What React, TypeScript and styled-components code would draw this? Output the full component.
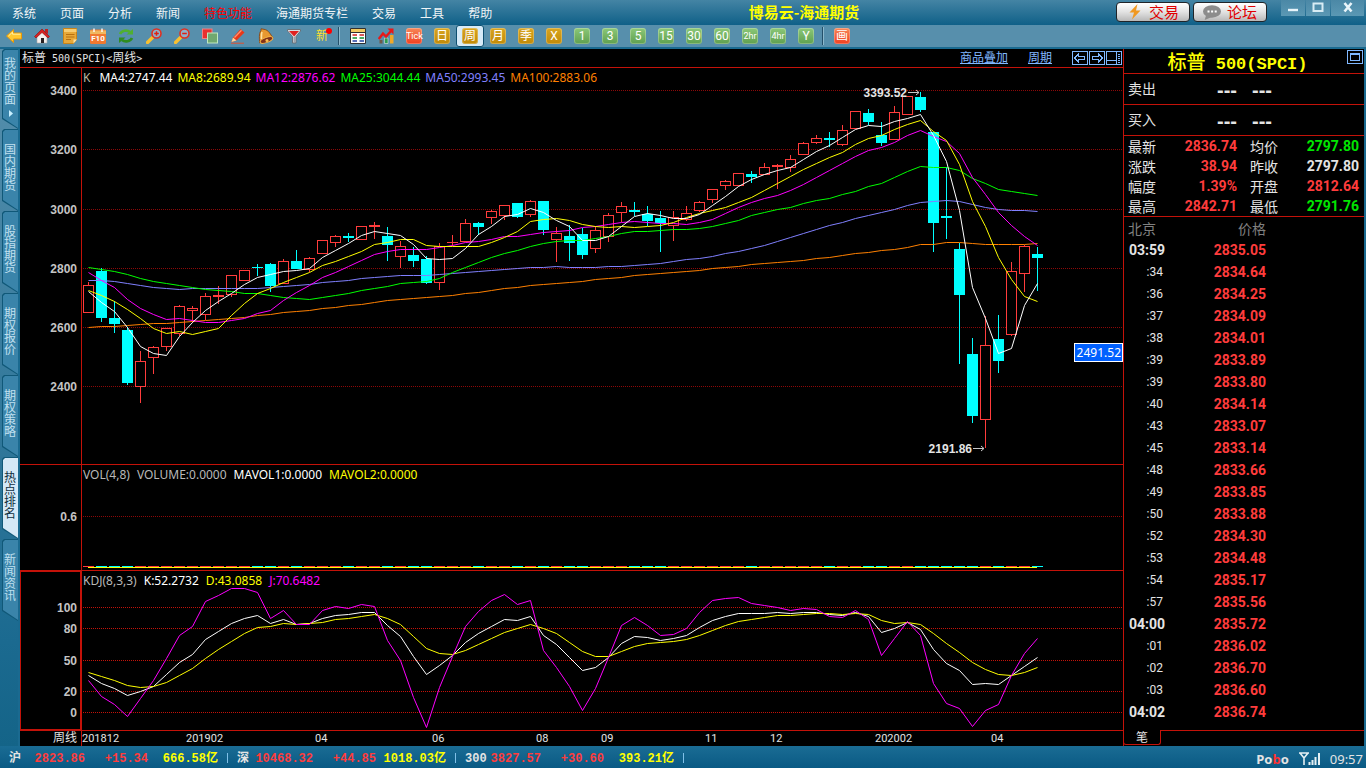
import React from "react";
import styled, { createGlobalStyle, css } from "styled-components";

const CJK = '"Noto Sans CJK SC", sans-serif';
const RED_LINE = "#c41209";
const RED = "#ff3c3c";
const CYAN = "#00ffff";
const GREEN = "#00e600";
const YELLOW = "#ffff00";
const LIGHT = "#e4e4e4";
const FRAME = "#1a6a90";

const GlobalStyle = createGlobalStyle`
  * { box-sizing: border-box; }
  body { margin: 0; background: #000; font-family: Roboto, ${CJK}; font-size: 12px; }
  button { font: inherit; color: inherit; background: none; border: 0; padding: 0; margin: 0; }
  h1, h2, dl, dd, dt, p { margin: 0; font-weight: normal; }
`;

/* ---------- market data ---------- */

// [rising, body top, body bottom, high, low] in rows of the price pane
type Candle = [number, number, number, number, number];
const CANDLES: Candle[] = [
  [1, 285, 313, 282, 313], [0, 271, 318, 268, 322], [0, 318, 324, 301, 333], [0, 330, 383, 327, 385],
  [1, 361, 387, 351, 403], [1, 347, 358, 346, 374], [1, 328, 347, 328, 351], [1, 306, 334, 305, 336],
  [1, 308, 311, 306, 323], [1, 296, 315, 293, 320], [1, 295, 297, 286, 304], [1, 275, 295, 275, 297],
  [1, 270, 281, 270, 281], [0, 267, 268, 264, 276], [0, 264, 286, 263, 292], [1, 261, 284, 259, 284],
  [0, 261, 269, 250, 269], [1, 258, 270, 257, 272], [1, 240, 254, 240, 254], [1, 236, 243, 235, 247],
  [0, 236, 238, 233, 242], [1, 226, 240, 226, 240], [1, 225, 227, 222, 239], [0, 236, 245, 227, 261],
  [1, 246, 257, 241, 268], [0, 255, 261, 247, 267], [0, 259, 283, 256, 284], [1, 246, 283, 243, 290],
  [1, 242, 243, 235, 246], [1, 223, 242, 219, 242], [0, 223, 227, 222, 235], [1, 211, 218, 210, 224],
  [1, 205, 216, 205, 220], [0, 203, 217, 203, 218], [1, 201, 215, 200, 217], [0, 201, 230, 201, 235],
  [1, 233, 240, 227, 262], [0, 236, 243, 225, 261], [0, 234, 255, 228, 259], [1, 230, 249, 226, 253],
  [1, 215, 237, 213, 242], [1, 206, 213, 202, 222], [0, 210, 212, 202, 216], [0, 214, 221, 206, 226],
  [0, 218, 223, 211, 252], [1, 217, 226, 211, 241], [1, 213, 220, 206, 221], [1, 202, 211, 201, 212],
  [1, 189, 200, 189, 203], [1, 181, 186, 180, 190], [1, 173, 186, 173, 186], [0, 174, 177, 171, 183],
  [1, 167, 175, 163, 175], [1, 165, 167, 164, 189], [1, 159, 168, 155, 172], [1, 143, 155, 142, 155],
  [1, 138, 143, 135, 144], [0, 138, 140, 132, 147], [1, 130, 145, 125, 146], [1, 111, 129, 111, 129],
  [0, 113, 122, 109, 125], [0, 135, 143, 122, 146], [1, 112, 140, 106, 140], [1, 96, 115, 96, 115],
  [0, 97, 110, 92, 112], [0, 132, 223, 132, 252], [0, 216, 218, 167, 239], [0, 249, 295, 243, 364],
  [0, 354, 416, 338, 423], [1, 345, 420, 316, 448], [0, 339, 361, 315, 373], [1, 271, 335, 262, 336],
  [1, 246, 274, 245, 292], [0, 254, 258, 247, 291],
];

const MA4 = [291, 302, 311, 327, 346, 353, 355, 336, 322, 310, 301, 293, 284, 277, 274, 271, 270, 268, 257, 250, 243, 235, 231, 233, 235, 244, 258, 259, 258, 248, 234, 226, 216, 214, 208, 212, 220, 226, 240, 240, 236, 226, 216, 213, 215, 218, 218, 214, 205, 196, 186, 179, 174, 170, 167, 159, 151, 145, 137, 129, 125, 126, 121, 118, 114, 135, 161, 210, 287, 318, 353, 348, 305, 283];
const MA8 = [290, 295, 301, 309, 318, 328, 333, 331, 334, 331, 328, 315, 303, 293, 288, 282, 277, 272, 265, 261, 256, 251, 244, 242, 239, 239, 245, 246, 246, 246, 246, 242, 237, 231, 221, 219, 218, 220, 224, 226, 227, 226, 227, 226, 225, 222, 217, 213, 210, 207, 202, 197, 190, 183, 176, 169, 163, 157, 152, 144, 138, 135, 129, 124, 120, 131, 140, 164, 201, 226, 257, 279, 296, 301];
const MA12 = [272, 280, 287, 299, 308, 314, 319, 318, 320, 322, 322, 320, 318, 313, 310, 300, 292, 285, 277, 272, 266, 260, 254, 251, 249, 249, 249, 247, 245, 242, 241, 239, 236, 236, 234, 232, 231, 230, 227, 226, 224, 222, 221, 222, 223, 223, 224, 222, 219, 213, 207, 202, 198, 195, 190, 184, 177, 170, 163, 156, 150, 147, 142, 135, 130, 136, 141, 153, 177, 194, 212, 225, 236, 245];
const MA25 = [267, 269, 271, 274, 278, 281, 283, 285, 287, 289, 290, 291, 293, 293, 295, 297, 298, 299, 297, 295, 293, 290, 288, 286, 283, 282, 281, 278, 272, 267, 262, 257, 253, 250, 246, 243, 241, 240, 240, 238, 236, 233, 231, 231, 230, 229, 229, 228, 226, 223, 220, 215, 212, 209, 207, 203, 200, 198, 194, 191, 186, 183, 177, 171, 166, 167, 167, 170, 178, 183, 189, 191, 193, 195];
const MA50 = [280, 280, 281, 283, 285, 287, 288, 289, 288, 288, 288, 288, 288, 288, 287, 286, 285, 284, 282, 281, 280, 278, 277, 276, 275, 275, 275, 274, 273, 272, 271, 270, 269, 268, 267, 267, 266, 267, 267, 267, 266, 266, 265, 264, 263, 261, 259, 258, 256, 253, 251, 248, 245, 241, 237, 233, 229, 225, 222, 218, 215, 212, 209, 205, 202, 201, 200, 201, 204, 207, 209, 210, 210, 211];
const MA100 = [327, 326, 326, 325, 324, 323, 323, 322, 321, 320, 319, 318, 317, 315, 314, 312, 311, 310, 308, 307, 305, 304, 302, 300, 299, 298, 297, 296, 295, 293, 292, 290, 288, 287, 285, 284, 283, 282, 281, 279, 278, 277, 275, 274, 273, 272, 271, 270, 268, 267, 266, 264, 263, 262, 261, 260, 258, 257, 255, 253, 252, 250, 249, 247, 244, 244, 242, 242, 243, 244, 244, 244, 244, 243];
const K = [675, 683, 688, 695, 691, 686, 674, 662, 654, 639, 631, 623, 618, 615, 623, 619, 624, 623, 618, 615, 614, 612, 612, 625, 636, 656, 674, 665, 655, 642, 633, 626, 619, 620, 616, 635, 644, 657, 670, 667, 657, 643, 636, 637, 640, 638, 635, 627, 620, 616, 613, 613, 613, 612, 613, 612, 612, 614, 615, 612, 616, 632, 628, 622, 629, 649, 663, 670, 684, 683, 684, 675, 666, 657];
const D = [672, 676, 680, 685, 687, 686, 682, 675, 668, 658, 649, 641, 633, 627, 626, 623, 624, 623, 622, 619, 618, 616, 614, 618, 624, 636, 648, 653, 654, 650, 644, 638, 632, 628, 624, 628, 633, 642, 651, 656, 656, 651, 646, 643, 642, 641, 639, 635, 630, 625, 621, 619, 617, 615, 615, 614, 613, 613, 614, 613, 614, 620, 623, 622, 624, 633, 643, 652, 662, 669, 674, 675, 672, 667];
const J = [680, 696, 704, 716, 698, 680, 658, 635, 626, 601, 595, 588, 588, 592, 618, 610, 624, 624, 610, 606, 608, 604, 606, 640, 660, 697, 727, 687, 656, 626, 611, 600, 594, 604, 600, 650, 667, 686, 710, 688, 657, 625, 617, 625, 635, 634, 628, 612, 600, 598, 597, 603, 605, 607, 610, 608, 609, 616, 617, 610, 619, 655, 638, 621, 635, 683, 703, 708, 726, 710, 704, 675, 653, 638];

const STEP = 13;
const centre = (i: number) => 6 + STEP * i;
const toPoints = (ys: number[]) => ys.map((y, i) => `${centre(i) + 0.5},${y + 0.5}`).join(" ");

const TICKS: [string, string][] = [
  ["03:59", "2835.05"], [":34", "2834.64"], [":36", "2834.25"], [":37", "2834.09"], [":38", "2834.01"],
  [":39", "2833.89"], [":39", "2833.80"], [":40", "2834.14"], [":43", "2833.07"], [":45", "2833.14"],
  [":48", "2833.66"], [":49", "2833.85"], [":50", "2833.88"], [":52", "2834.30"], [":53", "2834.48"],
  [":54", "2835.17"], [":57", "2835.56"], ["04:00", "2835.72"], [":01", "2836.02"], [":02", "2836.70"],
  [":03", "2836.60"], ["04:02", "2836.74"],
];

const STATS: [string, string, string][] = [
  ["最新", "2836.74", RED], ["均价", "2797.80", GREEN],
  ["涨跌", "38.94", RED], ["昨收", "2797.80", LIGHT],
  ["幅度", "1.39%", RED], ["开盘", "2812.64", RED],
  ["最高", "2842.71", RED], ["最低", "2791.76", GREEN],
];

/* ---------- window frame ---------- */

const Page = styled.div`
  display: flex;
  flex-direction: column;
  min-height: 100vh;
  color: ${LIGHT};
`;

const TitleBar = styled.header`
  display: flex;
  height: 25px;
  padding-left: 12px;
  background: linear-gradient(#4484a4, #0f6088);
`;

const Menu = styled.nav`
  display: flex;
  gap: 24px;
`;

const MenuItem = styled.button<{ $hot?: boolean }>`
  height: 25px;
  padding-top: 3px;
  line-height: 22px;
  color: ${(p) => (p.$hot ? "#ff0000" : "#f0f4f6")};
`;

const AppTitle = styled.h1`
  flex: 1;
  text-align: center;
  font: bold 15px/24px ${CJK};
  color: ${YELLOW};
`;

const TitleActions = styled.div`
  display: flex;
  gap: 3px;
  padding: 2px 14px 0 0;
`;

const TitleButton = styled.button`
  display: flex;
  align-items: center;
  justify-content: center;
  gap: 6px;
  width: 74px;
  height: 20px;
  border: 1px solid #202428;
  border-radius: 4px;
  background: linear-gradient(#ffffff, #e2e2e2 50%, #b8b8b8);
  color: #e00000;
  font: 15px/18px ${CJK};
`;

const WindowControls = styled.div`
  display: flex;
  gap: 1px;
  padding-right: 2px;
`;

const WindowButton = styled.button<{ $wide?: boolean }>`
  display: flex;
  justify-content: center;
  width: ${(p) => (p.$wide ? 33 : 24)}px;
  height: 16px;
  background: linear-gradient(#4b88a6, #5b98b4);
`;

const Toolbar = styled.div`
  display: flex;
  height: 24px;
  border-bottom: 2px solid ${FRAME};
  background: #578fac;
`;

const ToolButton = styled.button<{ $active?: boolean }>`
  display: flex;
  align-items: center;
  justify-content: center;
  width: 28px;
  height: 22px;
  ${(p) =>
    p.$active &&
    css`
      border: 1px solid #0d4f70;
      border-radius: 3px;
      background: #d6ebf8;
    `}
`;

const ToolDivider = styled.span`
  width: 6px;
  margin: 2px 0 2px 2px;
  border-left: 1px solid #24506a;
  box-shadow: inset 1px 0 #8cb8cc;
`;

const tints = {
  gold: "linear-gradient(#d9a520, #c08a08)",
  green: "linear-gradient(#8cc878, #5ea050)",
  red: "linear-gradient(#f88858, #f04020)",
};
const Badge = styled.span<{ $tint: keyof typeof tints }>`
  display: block;
  width: 16px;
  height: 16px;
  border-radius: 3px;
  background: ${(p) => tints[p.$tint]};
  box-shadow: inset 0 0 0 1px rgba(255, 255, 255, 0.25);
  color: #fff;
  font: 12px/16px Roboto, ${CJK};
  text-align: center;
`;
const SmallBadge = styled(Badge)`
  font: 9px/16px Roboto, ${CJK};
`;

const NewLabel = styled.span`
  position: relative;
  color: #ffe030;
  line-height: 22px;
  &::after {
    content: "";
    position: absolute;
    top: 3px;
    right: -4px;
    width: 6px;
    height: 6px;
    border-radius: 50%;
    background: #ff0000;
  }
`;

const Workspace = styled.div`
  display: flex;
  flex: 1;
  border-right: 2px solid ${FRAME};
  background: #000;
`;

const SideTabs = styled.nav`
  width: 20px;
  padding-left: 2px;
  border-right: 2px solid ${FRAME};
  background: linear-gradient(#5890ad, #1b6a90 85%, #146488);
`;

const SideTab = styled.button<{ $active?: boolean; $first?: boolean }>`
  position: relative;
  display: flex;
  flex-direction: column;
  isolation: isolate;
  width: 16px;
  height: ${(p) => (p.$first ? 80 : 82)}px;
  padding: ${(p) => (p.$first ? "8px 2px 0" : "14px 2px 0")};
  color: ${(p) => (p.$active ? "#103040" : "#c0e0f0")};
  font: 12px/12px ${CJK};
  text-align: left;
  &::before,
  &::after {
    content: "";
    position: absolute;
    inset: 0;
    z-index: -2;
    clip-path: polygon(0 2px, 2px 0, 100% 0, 100% 100%, 0 calc(100% - 10px));
    background: #105878;
  }
  &::after {
    inset: 1px 0 1px 1px;
    z-index: -1;
    background: ${(p) => (p.$active ? "#d4e8f6" : "#3a84aa")};
  }
`;

/* ---------- chart column ---------- */

const ChartColumn = styled.main`
  display: flex;
  flex: 1;
  flex-direction: column;
  min-width: 0;
`;

const ChartHeader = styled.div`
  display: flex;
  align-items: center;
  height: 19px;
  padding: 0 1px 0 2px;
  border-bottom: 1px solid ${RED_LINE};
  line-height: 18px;
`;

const Latin = styled.span`
  font: 10px/18px "DejaVu Sans Mono", monospace;
`;

const ChartTitle = styled.h2`
  flex: 1;
  font-size: 12px;
`;

const HeaderLink = styled.a`
  margin-right: 20px;
  color: #80b8ff;
`;

const IconRow = styled.div`
  display: flex;
  gap: 1px;
  color: #80b8ff;
`;

const IconButton = styled.button`
  display: block;
  height: 15px;
`;

const Pane = styled.section<{ $grow?: boolean }>`
  display: flex;
  flex: ${(p) => (p.$grow ? 1 : "none")};
  border-bottom: 1px solid ${RED_LINE};
`;

const AxisColumn = styled.div<{ $selected?: boolean }>`
  display: flex;
  width: 62px;
  border-right: 1px solid ${RED_LINE};
  ${(p) =>
    p.$selected &&
    css`
      box-shadow: inset 0 0 0 1px ${RED_LINE};
    `}
`;

const Plot = styled.div`
  position: relative;
  flex: 1;
  min-width: 0;
`;

const Legend = styled.div<{ $loose?: boolean }>`
  display: flex;
  gap: ${(p) => (p.$loose ? 7 : 5)}px;
  height: 20px;
  padding-left: 1px;
  font: 12px/20px "Noto Sans", sans-serif;
  white-space: nowrap;
`;

const LegendItem = styled.span<{ $color: string; $gap?: boolean }>`
  color: ${(p) => p.$color};
  padding-right: ${(p) => (p.$gap ? 4 : 0)}px;
`;

const Drawing = styled.svg`
  display: block;
  width: 100%;
  overflow: visible;
`;

const PriceTag = styled.output`
  position: absolute;
  top: 275px;
  right: 0;
  padding: 0 1px 0 2px;
  border: 1px solid #fff;
  background: #0060ff;
  color: #fff;
  font: 12px/17px "Noto Sans", sans-serif;
`;

const DateRow = styled.div`
  display: flex;
  height: 15px;
  line-height: 15px;
`;

const PeriodCell = styled.div`
  width: 62px;
  padding-right: 4px;
  border-right: 1px solid ${RED_LINE};
  text-align: right;
`;

/* ---------- quote column ---------- */

const QuoteColumn = styled.aside`
  display: flex;
  flex-direction: column;
  width: 241px;
  border-left: 1px solid ${RED_LINE};
`;

const QuoteTitle = styled.div`
  display: flex;
  height: 25px;
  padding: 1px 1px 0 0;
  border-bottom: 1px solid ${RED_LINE};
`;

const QuoteName = styled.h2`
  flex: 1;
  padding-left: 4px;
  color: ${YELLOW};
  font: bold 17px/23px "Liberation Mono", ${CJK};
  text-align: center;
`;

const QuoteNameHan = styled.span`
  font: 500 19px/22px ${CJK};
`;

const BidRow = styled.div`
  display: grid;
  grid-template-columns: 89px 35px 1fr;
  height: 31px;
  padding: 0 5px 0 4px;
  border-bottom: 1px solid ${RED_LINE};
  font: 14px/29px ${CJK};
`;

const Dashes = styled.span`
  font: bold 20px/32px "Liberation Sans", sans-serif;
`;

const Stats = styled.dl`
  display: grid;
  grid-template-columns: 42px 67px 13px 42px 1fr;
  padding: 0 5px 0 4px;
  border-bottom: 1px solid ${RED_LINE};
  font: 14px/20px ${CJK};
`;

const StatLabel = styled.dt<{ $second: boolean }>`
  grid-column: ${(p) => (p.$second ? 4 : 1)};
`;

const StatValue = styled.dd<{ $color: string; $second: boolean }>`
  grid-column: ${(p) => (p.$second ? 5 : 2)};
  color: ${(p) => p.$color};
  font: bold 14px/20px Roboto, sans-serif;
  text-align: right;
`;

const TickTable = styled.table`
  width: 142px;
  border-collapse: collapse;
  table-layout: fixed;
  th {
    height: 22px;
    padding: 0;
    color: #808080;
    font: 14px/22px ${CJK};
    text-align: right;
  }
  th:first-child {
    width: 39px;
    padding-left: 4px;
    text-align: left;
  }
`;

const TimeCell = styled.td<{ $full: boolean }>`
  height: 22px;
  padding: 0 0 0 5px;
  color: ${LIGHT};
  font: ${(p) => (p.$full ? "bold 14px" : "12px")}/22px Roboto, sans-serif;
  text-align: ${(p) => (p.$full ? "left" : "right")};
`;

const PriceCell = styled.td`
  padding: 0;
  color: ${RED};
  font: bold 14px/22px Roboto, sans-serif;
  text-align: right;
`;

const QuoteTabs = styled.div`
  display: flex;
  margin-top: auto;
  height: 16px;
  margin-left: -1px;
  &::after {
    content: "";
    flex: 1;
    border-top: 1px solid ${RED_LINE};
  }
`;

const QuoteTab = styled.button`
  width: 38px;
  height: 15px;
  padding-top: 2px;
  border: solid ${RED_LINE};
  border-width: 0 1px 1px;
  border-radius: 0 0 3px 3px;
  line-height: 12px;
`;

/* ---------- status bar ---------- */

const StatusBar = styled.footer`
  display: flex;
  align-items: center;
  height: 22px;
  padding: 3px 3px 0 9px;
  background: linear-gradient(#1a6c94, #0a5a84);
  line-height: 18px;
`;

const IndexQuote = styled.div`
  display: grid;
  grid-template-columns: 16px 60px 63px 70px 19px;
  font: bold 12px/18px "Liberation Mono", ${CJK};
  text-align: right;
  white-space: nowrap;
`;

const IndexName = styled.span`
  text-align: left;
`;
const IndexValue = styled.span<{ $color: string }>`
  color: ${(p) => p.$color};
`;
const IndexDivider = styled.span`
  width: 1px;
  height: 10px;
  margin: 3px 9px;
  background: #80c0e8;
`;

const Brand = styled.span`
  margin-left: auto;
  margin-right: 10px;
  font: bold 13px/18px "Noto Sans", sans-serif;
`;
const BrandAccent = styled.span`
  color: #ff3030;
`;
const Clock = styled.time`
  margin-left: 9px;
  font: 13px/18px "Noto Sans", sans-serif;
`;

/* ---------- icons ---------- */

const Icon = ({ children, size = 16 }: { children: React.ReactNode; size?: number }) => (
  <svg width={size} height={size} viewBox="0 0 16 16" fill="none" aria-hidden="true">
    {children}
  </svg>
);

const BackIcon = () => (
  <Icon>
    <path d="M0.5 8 7.5 1.5V5H15.500V11H7.500V14.500Z" fill="#ffc830" stroke="#e89808" />
    <path d="M2.500 8 6.500 4.200V6.200H14.500" stroke="#fff0a0" />
  </Icon>
);
const HomeIcon = () => (
  <Icon>
    <path d="M3 8 8 3.500 13 8V15H3Z" fill="#f4f0ee" stroke="#b0a8a8" strokeWidth=".6" />
    <path d="M11 1H14V6L11 4Z" fill="#c02020" />
    <path d="M0.500 8.500 8 1 15.500 8.500 14 10 8 4.500 2 10Z" fill="#d82020" stroke="#881010" strokeWidth=".6" />
    <path d="M7 10h3v5H7Z" fill="#282020" />
  </Icon>
);
const NoteIcon = () => (
  <Icon>
    <path d="M1.500 .500H14.500V11.500L11.500 15.500H1.500Z" fill="#e8a838" stroke="#c88418" />
    <path d="M2 1H14.500V4H2Z" fill="#f8cc70" />
    <path d="M4 6.500H12.500M4 9H12.500M4 11.500H9" stroke="#b87010" />
    <path d="M15 11.500H11.500V15.500Z" fill="#ffe0a0" />
  </Icon>
);
const F10Icon = () => (
  <Icon>
    <rect x="0" y="1.500" width="16" height="14.500" rx="1.500" fill="#f07830" />
    <path d="M0 2.500H16V6H0Z" fill="#f0b860" />
    <path d="M4 .500V4M12 .500V4" stroke="#fff" strokeWidth="1.400" />
    <text x="8" y="13" fontFamily="Roboto" fontWeight="bold" fontSize="8" textAnchor="middle" fill="#fff">F10</text>
  </Icon>
);
const RefreshIcon = () => (
  <Icon>
    <path d="M2 6C3.500 2.500 9 1.500 12 4" stroke="#50b030" strokeWidth="2.600" />
    <path d="M8.500 6.500H15V1Z" fill="#50b030" />
    <path d="M14 10C12.500 13.500 7 14.500 4 12" stroke="#2f8c20" strokeWidth="2.600" />
    <path d="M7.500 9.500H1V15Z" fill="#2f8c20" />
  </Icon>
);
const LensIcon = ({ plus }: { plus?: boolean }) => (
  <Icon>
    <path d="M1.500 14.500 6.500 9.500" stroke="#f8c030" strokeWidth="3.400" strokeLinecap="round" />
    <circle cx="10.500" cy="5.500" r="4.500" fill="#8fb0c8" stroke="#e03020" strokeWidth="1.600" />
    <path d={plus ? "M8.200 5.500H12.800M10.500 3.200V7.800" : "M8.200 5.500H12.800"} stroke="#e02010" strokeWidth="1.500" />
  </Icon>
);
const LayersIcon = () => (
  <Icon>
    <rect x="0.500" y="1" width="9.500" height="9.500" fill="#e83030" stroke="#f08080" />
    <rect x="5.500" y="5" width="10" height="10" fill="#70a870" stroke="#c0e8c0" />
  </Icon>
);
const PencilIcon = () => (
  <Icon>
    <path d="M1 15.200H14" stroke="#e05030" />
    <path d="M1.500 14 3 9.500 10.500 1 14.500 4.500 6.500 12.500Z" fill="#e83818" />
    <path d="M4.500 9.500 11.500 2.200" stroke="#ff9070" strokeWidth="1.300" />
    <path d="M1.500 14 3 9.500 6.500 12.500Z" fill="#f8d8a0" />
  </Icon>
);
const BellIcon = () => (
  <Icon>
    <path d="M3 .800 6 1.300C11 2 12.500 7 15 9.500L1.500 14.800C1.700 11 .500 6 3 2.500Z" fill="#e89830" stroke="#7c3c10" strokeWidth=".8" />
    <path d="M4 4C3 6.500 3.500 9 3.500 11" stroke="#ffe0a0" strokeWidth="1.600" />
    <ellipse cx="8.500" cy="12" rx="6.600" ry="2.500" transform="rotate(-20 8.500 12)" fill="#803018" stroke="#f0b048" />
    <circle cx="9" cy="12.500" r="1.500" fill="#ffc050" />
  </Icon>
);
const FunnelIcon = () => (
  <Icon>
    <path d="M1.500 1.500H14.500V3L10 8.500V15H6.500V8.500L1.500 3Z" fill="#d8dce0" stroke="#687078" />
    <path d="M3 3H13L8.200 8.500Z" fill="#e02020" />
    <path d="M8.200 9V14.500" stroke="#808890" />
  </Icon>
);
const ListIcon = () => (
  <Icon>
    <path d="M.500 .500H15.500V15.500H.500Z" fill="#fff" stroke="#303030" />
    <path d="M1 1H15V4H1Z" fill="#f0c860" />
    <path d="M0 4.500H16" stroke="#303030" />
    <path d="M2.500 7H7M9.500 7H14" stroke="#d02020" strokeWidth="1.300" />
    <path d="M2.500 10H7M9.500 10H14" stroke="#109030" strokeWidth="1.300" />
    <path d="M2.500 13H7M9.500 13H14" stroke="#2040a0" strokeWidth="1.300" />
  </Icon>
);
const TrendIcon = () => (
  <Icon>
    <path d="M1.500 12h3v3.500h-3Z" fill="#705848" />
    <path d="M6.500 10h3.500v5.500H6.500Z" fill="#2c9c50" stroke="#e0e0e0" strokeWidth=".6" />
    <path d="M12 7h3.500v8.500H12Z" fill="#f0a828" />
    <path d="M.800 11 5 5.500 8 8.500 13.500 2.500" stroke="#e81818" strokeWidth="2.400" />
    <path d="M9.500 .500H15.500V6.500Z" fill="#e81818" />
  </Icon>
);
const BoltIcon = () => (
  <Icon>
    <path d="M10.500 0 2.500 8.500H7L5 15.500 13.500 6.500H9Z" fill="#f09820" />
  </Icon>
);
const ChatIcon = () => (
  <Icon size={18}>
    <ellipse cx="8" cy="7.500" rx="8" ry="5.500" fill="#8c8c8c" />
    <path d="M3 10 1.500 15 8 12.500Z" fill="#8c8c8c" />
    <path d="M4 7.500H5.800M7.200 7.500H9M10.400 7.500H12.200" stroke="#fff" strokeWidth="1.800" />
  </Icon>
);
const BoxIcon = ({ d }: { d: string }) => (
  <svg width="16" height="15" viewBox="0 0 16 15" fill="none" stroke="currentColor" shapeRendering="crispEdges" aria-hidden="true">
    <path d={`M.500 .500H15.500V13.500H.500Z${d}`} />
  </svg>
);

const TOOLS_LEFT: [string, React.ReactNode][] = [
  ["后退", <BackIcon />], ["主页", <HomeIcon />], ["笔记", <NoteIcon />], ["F10", <F10Icon />],
  ["刷新", <RefreshIcon />], ["放大", <LensIcon plus />], ["缩小", <LensIcon />], ["叠加", <LayersIcon />],
  ["画线", <PencilIcon />], ["预警", <BellIcon />], ["筛选", <FunnelIcon />], ["新", <NewLabel>新</NewLabel>],
];

const PERIODS: [string, keyof typeof tints][] = [
  ["Tick", "red"], ["日", "gold"], ["周", "gold"], ["月", "gold"], ["季", "gold"], ["X", "gold"],
  ["1", "green"], ["3", "green"], ["5", "green"], ["15", "green"], ["30", "green"], ["60", "green"],
  ["2hr", "green"], ["4hr", "green"], ["Y", "green"],
];

/* ---------- chart parts ---------- */

type Mark = [string, number];

const Axis = ({ top, height, marks }: { top: number; height: number; marks: Mark[] }) => (
  <Drawing height={height}>
    {marks.map(([label, y]) => (
      <text key={label} x="57" y={y - top + 5} textAnchor="end" fill="#c4c4c4" fontFamily="Liberation Sans" fontWeight="bold" fontSize="12">
        {label}
      </text>
    ))}
  </Drawing>
);

const GridLines = ({ marks, color }: { marks: Mark[]; color: string }) => (
  <>
    {marks.map(([label, y]) => (
      <line key={label} x1="1" x2="100%" y1={y + 0.5} y2={y + 0.5} stroke={color} strokeDasharray="1 1" shapeRendering="crispEdges" />
    ))}
  </>
);

const Curve = ({ ys, color }: { ys: number[]; color: string }) => (
  <polyline points={toPoints(ys)} fill="none" stroke={color} strokeWidth="1" />
);

const CandleShape = ({ data, index }: { data: Candle; index: number }) => {
  const [up, top, bottom, high, low] = data;
  const x = centre(index);
  const color = up ? RED : CYAN;
  return (
    <g shapeRendering="crispEdges">
      <rect x={x} y={high} width="1" height={low - high} fill={color} />
      <rect x={x - 5} y={top} width="11" height={bottom - top} fill={color} />
      {up && bottom - top > 2 ? <rect x={x - 4} y={top + 1} width="9" height={bottom - top - 2} fill="#000" /> : null}
    </g>
  );
};

const PRICE_MARKS: Mark[] = [["3400", 90], ["3200", 149], ["3000", 209], ["2800", 268], ["2600", 327], ["2400", 386]];
const VOL_MARKS: Mark[] = [["0.6", 516]];
const KDJ_MARKS: Mark[] = [["100", 607], ["80", 628], ["50", 660], ["20", 691], ["0", 712]];
const DATES: [string, number][] = [
  ["201812", 0], ["201902", 104], ["04", 233], ["06", 350], ["08", 454], ["09", 519], ["11", 623], ["12", 688], ["202002", 793], ["04", 909],
];

const Extreme = ({ label, x, y }: { label: string; x: number; y: number }) => (
  <g>
    <text x={x - 13} y={y + 5} textAnchor="end" fill={LIGHT} fontFamily="Liberation Sans" fontWeight="bold" fontSize="12">
      {label}
    </text>
    <path d={`M${x - 12} ${y + 0.5}H${x - 1}M${x - 4} ${y - 2}L${x - 1} ${y + 0.5}L${x - 4} ${y + 3}`} stroke="#c8c8c8" fill="none" />
  </g>
);

const PricePane = () => (
  <Pane $grow>
    <AxisColumn>
      <Axis top={68} height={396} marks={PRICE_MARKS} />
    </AxisColumn>
    <Plot>
      <Legend>
        <LegendItem $color="#b8b8a0" $gap>K</LegendItem>
        <LegendItem $color="#ffffff">MA4:2747.44</LegendItem>
        <LegendItem $color={YELLOW}>MA8:2689.94</LegendItem>
        <LegendItem $color="#ff00ff">MA12:2876.62</LegendItem>
        <LegendItem $color="#00ff00">MA25:3044.44</LegendItem>
        <LegendItem $color="#8080ff">MA50:2993.45</LegendItem>
        <LegendItem $color="#ff8000">MA100:2883.06</LegendItem>
      </Legend>
      <Drawing height="376">
        <g transform="translate(0 -88)">
          <GridLines marks={PRICE_MARKS} color="#8c0808" />
          {CANDLES.map((c, i) => (
            <CandleShape key={i} data={c} index={i} />
          ))}
          <Curve ys={MA100} color="#ff8000" />
          <Curve ys={MA50} color="#8080ff" />
          <Curve ys={MA25} color="#00ff00" />
          <Curve ys={MA12} color="#ff00ff" />
          <Curve ys={MA8} color={YELLOW} />
          <Curve ys={MA4} color="#ffffff" />
          <Extreme label="3393.52" x={838} y={92} />
          <Extreme label="2191.86" x={903} y={448} />
        </g>
      </Drawing>
      <PriceTag>2491.52</PriceTag>
    </Plot>
  </Pane>
);

const VolumePane = () => (
  <Pane>
    <AxisColumn>
      <Axis top={465} height={105} marks={VOL_MARKS} />
    </AxisColumn>
    <Plot>
      <Legend $loose>
        <LegendItem $color="#b8b8b8">VOL(4,8)</LegendItem>
        <LegendItem $color="#b8b8b8">VOLUME:0.0000</LegendItem>
        <LegendItem $color="#ffffff">MAVOL1:0.0000</LegendItem>
        <LegendItem $color={YELLOW}>MAVOL2:0.0000</LegendItem>
      </Legend>
      <Drawing height="85">
        <g transform="translate(0 -485)" shapeRendering="crispEdges">
          <GridLines marks={VOL_MARKS} color="#8c0808" />
          {CANDLES.map((c, i) => (
            <rect key={i} x={centre(i) - 5} y="566" width="11" height="1" fill={c[0] ? RED : CYAN} />
          ))}
          <rect x="6" y="567" width={STEP * 73} height="1" fill={YELLOW} />
        </g>
      </Drawing>
    </Plot>
  </Pane>
);

const KdjPane = () => (
  <Pane>
    <AxisColumn $selected>
      <Axis top={571} height={159} marks={KDJ_MARKS} />
    </AxisColumn>
    <Plot>
      <Legend $loose>
        <LegendItem $color="#b8b8b8">KDJ(8,3,3)</LegendItem>
        <LegendItem $color="#ffffff">K:52.2732</LegendItem>
        <LegendItem $color={YELLOW}>D:43.0858</LegendItem>
        <LegendItem $color="#ff00ff">J:70.6482</LegendItem>
      </Legend>
      <Drawing height="139">
        <g transform="translate(0 -591)">
          <GridLines marks={KDJ_MARKS} color="#c41209" />
          <Curve ys={K} color="#ffffff" />
          <Curve ys={D} color={YELLOW} />
          <Curve ys={J} color="#ff00ff" />
        </g>
      </Drawing>
    </Plot>
  </Pane>
);

const INDEXES: [string, string, string, string][] = [
  ["沪", "2823.86", "+15.34", "666.58亿"],
  ["深", "10468.32", "+44.85", "1018.03亿"],
  ["300", "3827.57", "+30.60", "393.21亿"],
];

export default function App() {
  return (
    <Page>
      <GlobalStyle />
      <TitleBar>
        <Menu>
          {["系统", "页面", "分析", "新闻", "特色功能", "海通期货专栏", "交易", "工具", "帮助"].map((m) => (
            <MenuItem key={m} $hot={m === "特色功能"}>{m}</MenuItem>
          ))}
        </Menu>
        <AppTitle>博易云-海通期货</AppTitle>
        <TitleActions>
          <TitleButton><BoltIcon />交易</TitleButton>
          <TitleButton><ChatIcon />论坛</TitleButton>
        </TitleActions>
        <WindowControls>
          <WindowButton aria-label="最小化">
            <Icon><path d="M3 10H13" stroke="#e8f4fa" strokeWidth="2.400" /></Icon>
          </WindowButton>
          <WindowButton aria-label="最大化">
            <Icon><path d="M3.500 3.500H12.500V11H3.500Z" stroke="#d8ecf4" strokeWidth="2" /></Icon>
          </WindowButton>
          <WindowButton aria-label="关闭" $wide>
            <Icon><path d="M4.500 3 11.500 11.500M11.500 3 4.500 11.500" stroke="#e8f4fa" strokeWidth="2.600" /></Icon>
          </WindowButton>
        </WindowControls>
      </TitleBar>

      <Toolbar>
        {TOOLS_LEFT.map(([label, icon]) => (
          <ToolButton key={label} aria-label={label}>{icon}</ToolButton>
        ))}
        <ToolDivider />
        <ToolButton aria-label="报价"><ListIcon /></ToolButton>
        <ToolButton aria-label="走势"><TrendIcon /></ToolButton>
        {PERIODS.map(([label, tint]) => (
          <ToolButton key={label} $active={label === "周"}>
            {label.length > 2 ? <SmallBadge $tint={tint}>{label}</SmallBadge> : <Badge $tint={tint}>{label}</Badge>}
          </ToolButton>
        ))}
        <ToolDivider />
        <ToolButton><Badge $tint="red">画</Badge></ToolButton>
      </Toolbar>

      <Workspace>
        <SideTabs>
          {["我的页面", "国内期货", "股指期货", "期权报价", "期权策略", "热点排名", "新闻资讯"].map((t, i) => (
            <SideTab key={t} $first={i === 0} $active={t === "热点排名"}>
              {t}
              {i === 0 && (
                <svg width="12" height="16" viewBox="0 0 12 16" aria-hidden="true">
                  <path d="M5 5V12L9 8.500Z" fill="#c8f0ff" />
                </svg>
              )}
            </SideTab>
          ))}
        </SideTabs>

        <ChartColumn>
          <ChartHeader>
            <ChartTitle>
              标普<Latin> 500(SPCI)&lt;</Latin>周线<Latin>&gt;</Latin>
            </ChartTitle>
            <HeaderLink href="#overlay">商品叠加</HeaderLink>
            <HeaderLink href="#period">周期</HeaderLink>
            <IconRow>
              <IconButton aria-label="向左"><BoxIcon d="M2.500 7 6.500 3V5.500H12.500V8.500H6.500V11Z" /></IconButton>
              <IconButton aria-label="向右"><BoxIcon d="M13.500 7 9.500 3V5.500H3.500V8.500H9.500V11Z" /></IconButton>
              <IconButton aria-label="布局"><BoxIcon d="M0 9.500H10.500M10.500 0V14M12 3.500H14M12 5.500H14M12 7.500H14M12 9.500H14M12 11.500H14" /></IconButton>
            </IconRow>
          </ChartHeader>
          <PricePane />
          <VolumePane />
          <KdjPane />
          <DateRow>
            <PeriodCell>周线</PeriodCell>
            <Plot>
              <Drawing height="15">
                {DATES.map(([label, x]) => (
                  <text key={x} x={x} y="11" fill={LIGHT} fontFamily="Roboto" fontSize="11">{label}</text>
                ))}
              </Drawing>
            </Plot>
          </DateRow>
        </ChartColumn>

        <QuoteColumn>
          <QuoteTitle>
            <QuoteName><QuoteNameHan>标普</QuoteNameHan> 500(SPCI)</QuoteName>
            <IconRow>
              <IconButton aria-label="展开"><BoxIcon d="M3.500 3.500H12.500V10.500H3.500ZM3 4.500H13" /></IconButton>
            </IconRow>
          </QuoteTitle>
          <BidRow><span>卖出</span><Dashes>---</Dashes><Dashes>---</Dashes></BidRow>
          <BidRow><span>买入</span><Dashes>---</Dashes><Dashes>---</Dashes></BidRow>
          <Stats>
            {STATS.map(([label, value, color], i) => (
              <React.Fragment key={label}>
                <StatLabel $second={i % 2 === 1}>{label}</StatLabel>
                <StatValue $second={i % 2 === 1} $color={color}>{value}</StatValue>
              </React.Fragment>
            ))}
          </Stats>
          <TickTable>
            <thead>
              <tr><th>北京</th><th>价格</th></tr>
            </thead>
            <tbody>
              {TICKS.map(([time, price], i) => (
                <tr key={i}>
                  <TimeCell $full={time.length === 5}>{time}</TimeCell>
                  <PriceCell>{price}</PriceCell>
                </tr>
              ))}
            </tbody>
          </TickTable>
          <QuoteTabs><QuoteTab>笔</QuoteTab></QuoteTabs>
        </QuoteColumn>
      </Workspace>

      <StatusBar>
        {INDEXES.map(([name, value, change, amount]) => (
          <IndexQuote key={name}>
            <IndexName>{name}</IndexName>
            <IndexValue $color={RED}>{value}</IndexValue>
            <IndexValue $color={RED}>{change}</IndexValue>
            <IndexValue $color={YELLOW}>{amount}</IndexValue>
            <IndexDivider />
          </IndexQuote>
        ))}
        <Brand>Po<BrandAccent>b</BrandAccent>o</Brand>
        <svg width="22" height="13" viewBox="0 0 22 13" fill="none" stroke="#e4f0f4" strokeWidth="1.600" aria-label="信号">
          <path d="M0 1H10M1 1 5 6 9 1M5 5V13" />
          <path d="M10.500 13V10M13.500 13V8M16.500 13V5M20 13V1" strokeWidth="2" />
        </svg>
        <Clock>09:57</Clock>
      </StatusBar>
    </Page>
  );
}
